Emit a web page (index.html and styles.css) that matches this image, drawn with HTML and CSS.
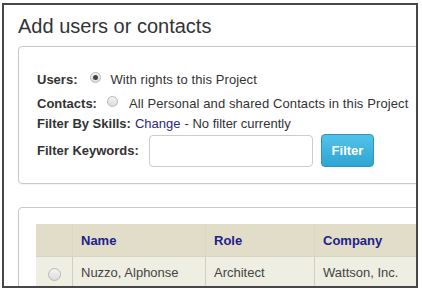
FILE: index.html
```html
<!DOCTYPE html>
<html>
<head>
<meta charset="utf-8">
<link rel="stylesheet" href="styles.css">
</head>
<body>
<div class="frame">
  <h1 class="title">Add users or contacts</h1>
  <div class="panel filters">
    <div class="row r-users">
      <span class="lbl">Users:</span>
      <span class="radio checked"></span>
      <span class="txt">With rights to this Project</span>
    </div>
    <div class="row r-contacts">
      <span class="lbl">Contacts:</span>
      <span class="radio"></span>
      <span class="txt">All Personal and shared Contacts in this Project</span>
    </div>
    <div class="row r-skills">
      <span class="lbl">Filter By Skills:</span>
      <span class="link">Change</span>
      <span class="plain">- No filter currently</span>
    </div>
    <div class="row r-keywords">
      <span class="lbl kw">Filter Keywords:</span>
      <span class="input"></span>
      <span class="btn">Filter</span>
    </div>
  </div>
  <div class="panel results">
    <div class="table">
      <div class="cell h c0"></div>
      <div class="cell h c1">Name</div>
      <div class="cell h c2">Role</div>
      <div class="cell h c3">Company</div>
      <div class="cell d c0"><span class="radio"></span></div>
      <div class="cell d c1">Nuzzo, Alphonse</div>
      <div class="cell d c2">Architect</div>
      <div class="cell d c3">Wattson, Inc.</div>
    </div>
  </div>
</div>
</body>
</html>
```
FILE: styles.css
```css
html, body {
  margin: 0;
  padding: 0;
  background: #fff;
}
body {
  font-family: "Liberation Sans", Arial, sans-serif;
  color: #333;
}
.frame {
  box-sizing: border-box;
  margin: 3px 0 0 2px;
  width: 416px;
  height: 285px;
  border: 2px solid #474747;
  overflow: hidden;
  padding-left: 14px;
}
.title {
  margin: 0;
  padding-top: 9px;
  font-weight: normal;
  font-size: 20px;
  line-height: 24px;
  color: #333;
  height: 32px;
}
.panel {
  width: 440px;
  border: 1px solid #c8c8c8;
  border-radius: 4px;
  box-sizing: border-box;
  box-shadow: 0 1px 1px rgba(0,0,0,0.05);
}
.filters {
  height: 138px;
  padding: 20px 0 0 18px;
  display: flex;
  flex-direction: column;
}
.row {
  display: flex;
  align-items: center;
  font-size: 13px;
  white-space: nowrap;
}
.lbl {
  font-weight: bold;
  color: #333;
}
.r-users { height: 16px; margin-top: 4px; }
.r-contacts { height: 16px; margin-top: 8px; }
.r-skills { height: 16px; margin-top: 4px; }
.r-keywords { margin-top: 3px; }
.radio {
  display: inline-block;
  width: 11px;
  height: 11px;
  border-radius: 50%;
  border: 1px solid #b8b8b8;
  background: linear-gradient(#f4f4f4, #dcdcdc);
  box-sizing: border-box;
  position: relative;
}
.radio.checked::after {
  content: "";
  position: absolute;
  left: 2px;
  top: 2px;
  width: 5px;
  height: 5px;
  border-radius: 50%;
  background: #444;
}
.r-users .radio { margin: -4px 9px 0 13px; }
.r-contacts .radio { margin: -4px 11px 0 10px; }
.txt { letter-spacing: 0.1px; }
.link { color: #28288a; margin-left: 4px; }
.plain { margin-left: 4px; }
.kw { width: 112px; }
.input {
  display: inline-block;
  width: 164px;
  height: 32px;
  border: 1px solid #ccc;
  border-radius: 4px;
  box-sizing: border-box;
}
.btn {
  margin-left: 8px;
  width: 53px;
  height: 33px;
  box-sizing: border-box;
  border-radius: 4px;
  border: 1px solid #2a95bf;
  background: linear-gradient(#52c2ea, #2fa5d2);
  color: #fff;
  font-weight: bold;
  font-size: 13px;
  display: flex;
  align-items: center;
  justify-content: center;
}
.results {
  margin-top: 23px;
  height: 120px;
  padding: 16px 0 0 17px;
}
.table {
  display: grid;
  grid-template-columns: 36px 133px 109px 120px;
  grid-template-rows: 32px 32px;
  font-size: 13px;
}
.cell {
  display: flex;
  align-items: center;
  padding-left: 8px;
}
.h {
  background: #e2ddc9;
  color: #21218c;
  font-weight: bold;
}
.d {
  background: #efeee3;
  color: #444;
  border-top: 1px solid #d8d4c0;
}
.c1, .c2, .c3 { border-left: 1px solid #d2ceba; }
.h.c1, .h.c2, .h.c3 { border-left-color: #ddd8c4; }
.c0 { padding-left: 0; justify-content: center; }
.d .radio { width: 13px; height: 13px; margin-top: 3px; }
```
